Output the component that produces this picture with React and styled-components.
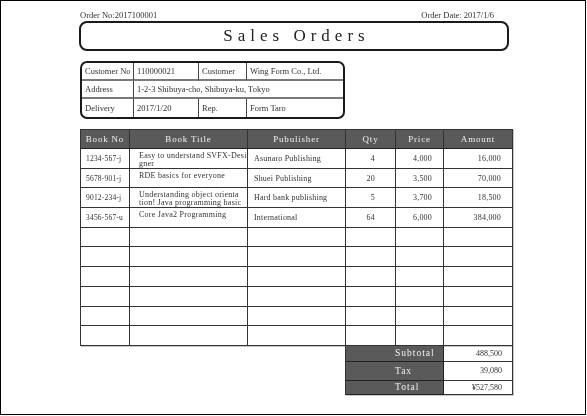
import React from "react";
import styled, { createGlobalStyle } from "styled-components";

const GlobalStyle = createGlobalStyle`
  html, body {
    margin: 0;
    padding: 0;
    background: #fff;
  }

  body {
    font-family: "Liberation Serif", "Noto Sans CJK JP", serif;
    color: #222;
    -webkit-font-smoothing: antialiased;
  }
`;

const orderLines = [
  { no: "1234-567-j", title: ["Easy to understand SVFX-Desi", "gner"], publisher: "Asunaro Publishing", qty: "4", price: "4,000", amount: "16,000" },
  { no: "5678-901-j", title: ["RDE basics for everyone"], publisher: "Shuei Publishing", qty: "20", price: "3,500", amount: "70,000" },
  { no: "9012-234-j", title: ["Understanding object orienta", "tion! Java programming basic"], publisher: "Hard bank publishing", qty: "5", price: "3,700", amount: "18,500" },
  { no: "3456-567-u", title: ["Core Java2 Programming"], publisher: "International", qty: "64", price: "6,000", amount: "384,000" },
];

const EMPTY_ROWS = 6;

const totals = [
  { label: "Subtotal", value: "488,500", height: 16 },
  { label: "Tax", value: "39,080", height: 19 },
  { label: "Total", value: "¥527,580", height: 14 },
];

const App = () => {
  return (
    <>
      <GlobalStyle />
      <Frame>
        <Sheet>
          <TopLine>
            <span>Order No:2017100001</span>
            <span>Order Date: 2017/1/6</span>
          </TopLine>

          <TitleBox>Sales Orders</TitleBox>

          <CustomerBox>
            <InfoCell>Customer No</InfoCell>
            <InfoCell>110000021</InfoCell>
            <InfoCell>Customer</InfoCell>
            <InfoCell $last>Wing Form Co., Ltd.</InfoCell>

            <InfoCell>Address</InfoCell>
            <InfoCell $span={3} $last>1-2-3 Shibuya-cho, Shibuya-ku, Tokyo</InfoCell>

            <InfoCell $bottom>Delivery</InfoCell>
            <InfoCell $bottom>2017/1/20</InfoCell>
            <InfoCell $bottom>Rep.</InfoCell>
            <InfoCell $bottom $last>Form Taro</InfoCell>
          </CustomerBox>

          <OrderTable>
            <HeadCell>Book No</HeadCell>
            <HeadCell>Book Title</HeadCell>
            <HeadCell>Pubulisher</HeadCell>
            <HeadCell>Qty</HeadCell>
            <HeadCell>Price</HeadCell>
            <HeadCell>Amount</HeadCell>

            {orderLines.map((line) => (
              <React.Fragment key={line.no}>
                <Cell $pad="0 0 0 5px" $small>{line.no}</Cell>
                <TitleCell>
                  {line.title.map((part) => (
                    <span key={part}>{part}</span>
                  ))}
                </TitleCell>
                <Cell $pad="0 0 0 6px">{line.publisher}</Cell>
                <Cell $align="right" $pad="0 20px 0 0">{line.qty}</Cell>
                <Cell $align="right" $pad="0 11px 0 0">{line.price}</Cell>
                <Cell $align="right" $pad="0 11px 0 0">{line.amount}</Cell>
              </React.Fragment>
            ))}

            {Array.from({ length: EMPTY_ROWS * 6 }).map((_, i) => (
              <Cell key={i} />
            ))}
          </OrderTable>

          <TotalsTable>
            {totals.map((row) => (
              <React.Fragment key={row.label}>
                <TotalLabel $h={row.height}>{row.label}</TotalLabel>
                <TotalValue $h={row.height}>{row.value}</TotalValue>
              </React.Fragment>
            ))}
          </TotalsTable>
        </Sheet>
      </Frame>
    </>
  );
};

const Frame = styled.div`
  box-sizing: border-box;
  width: 586px;
  height: 415px;
  border: 1px solid #000;
  padding: 8px 0 0 78px;
  filter: grayscale(1);
`;

const Sheet = styled.div`
  display: flex;
  flex-direction: column;
  align-items: flex-start;
`;

const TopLine = styled.div`
  display: flex;
  justify-content: space-between;
  width: 414px;
  height: 12px;
  margin-left: 1px;
  font-size: 8.5px;
  line-height: 12px;
  color: #333;
`;

const TitleBox = styled.div`
  box-sizing: border-box;
  display: flex;
  justify-content: center;
  align-items: center;
  width: 430px;
  height: 30px;
  padding-left: 5px;
  border: 2px solid #1a1a1a;
  border-radius: 8px;
  font-size: 17px;
  letter-spacing: 5px;
  color: #222;
`;

const CustomerBox = styled.div`
  box-sizing: border-box;
  display: grid;
  grid-template-columns: 52px 65px 48px 1fr;
  grid-template-rows: repeat(3, 1fr);
  width: 265px;
  height: 58px;
  margin: 10px 0 0 1px;
  border: 2px solid #1a1a1a;
  border-radius: 7px;
  overflow: hidden;
`;

const InfoCell = styled.div`
  display: flex;
  align-items: center;
  grid-column: span ${(p) => p.$span || 1};
  padding-left: 3px;
  border-right: ${(p) => (p.$last ? "none" : "1px solid #444")};
  border-bottom: ${(p) => (p.$bottom ? "none" : "2px solid #7a7a7a")};
  font-size: 8.5px;
  white-space: nowrap;
  color: #333;
`;

const OrderTable = styled.div`
  display: grid;
  grid-template-columns: 49px 118px 98px 50px 48px 69px;
  grid-template-rows: 19px;
  grid-auto-rows: 19.7px;
  margin: 10px 0 0 1px;
  border-left: 1px solid #333;
  border-top: 1px solid #333;
  box-shadow: 1px 1px 0 #c8c8c8;
`;

const HeadCell = styled.div`
  box-sizing: border-box;
  display: flex;
  justify-content: center;
  align-items: center;
  background: #5a5a5a;
  border-right: 1px solid #333;
  border-bottom: 1px solid #222;
  font-size: 9px;
  letter-spacing: 0.8px;
  color: #f2f2f2;
`;

const Cell = styled.div`
  box-sizing: border-box;
  display: flex;
  align-items: center;
  justify-content: ${(p) => (p.$align === "right" ? "flex-end" : "flex-start")};
  padding: ${(p) => p.$pad || "0"};
  border-right: 1px solid #333;
  border-bottom: 1px solid #333;
  font-size: ${(p) => (p.$small ? "7.5px" : "8px")};
  letter-spacing: 0.2px;
  white-space: nowrap;
  color: #333;
`;

const TitleCell = styled.div`
  box-sizing: border-box;
  display: flex;
  flex-direction: column;
  padding: 3px 0 0 9px;
  border-right: 1px solid #333;
  border-bottom: 1px solid #333;
  font-size: 8px;
  line-height: 7.5px;
  letter-spacing: 0.25px;
  white-space: nowrap;
  color: #333;
`;

const TotalsTable = styled.div`
  display: grid;
  grid-template-columns: 98px 69px;
  margin-left: 266px;
  border-left: 1px solid #333;
  box-shadow: 1px 1px 0 #c8c8c8;
`;

const TotalLabel = styled.div`
  box-sizing: border-box;
  display: flex;
  align-items: center;
  height: ${(p) => p.$h}px;
  padding-left: 49px;
  background: #5a5a5a;
  border-right: 1px solid #222;
  border-bottom: 1px solid #222;
  font-size: 9.5px;
  letter-spacing: 1px;
  color: #f2f2f2;
`;

const TotalValue = styled.div`
  box-sizing: border-box;
  display: flex;
  align-items: center;
  justify-content: flex-end;
  height: ${(p) => p.$h}px;
  padding-right: 10px;
  border-right: 1px solid #333;
  border-bottom: 1px solid #333;
  font-size: 8px;
  color: #333;
`;

export default App;
